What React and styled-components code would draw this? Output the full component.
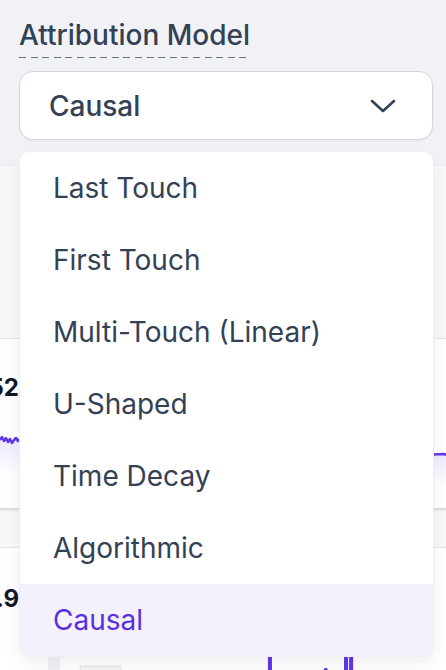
import React from "react";
import styled, { createGlobalStyle } from "styled-components";

const GlobalStyle = createGlobalStyle`
  html, body {
    margin: 0;
    padding: 0;
    background: #f1f2f6;
    font-family: Inter, "Noto Sans", sans-serif;
    overflow: hidden;
  }
`;

const Page = styled.div`
  position: relative;
  width: 446px;
  height: 670px;
  overflow: hidden;
`;

const Header = styled.div`
  height: 165px;
  box-sizing: border-box;
  padding: 18px 13px 0 19px;
  display: flex;
  flex-direction: column;
  align-items: flex-start;
  gap: 13px;
`;

const Label = styled.span`
  font-size: 28px;
  font-weight: 500;
  line-height: 35px;
  color: #334155;
  padding-bottom: 5px;
  background: repeating-linear-gradient(to right, #6b7280 0 7px, transparent 7px 11.6px) left bottom / 100% 1.5px no-repeat;
`;

const SelectButton = styled.div`
  align-self: stretch;
  height: 69px;
  box-sizing: border-box;
  border: 1.5px solid #d3d6dd;
  border-radius: 14px;
  background: #fff;
  box-shadow: 0 1px 2px rgba(16, 24, 40, 0.05);
  display: flex;
  align-items: center;
  justify-content: space-between;
  padding: 0 36px 0 29px;
  font-size: 28px;
  font-weight: 500;
  color: #334155;
`;

const Board = styled.div`
  display: grid;
  grid-template-columns: 48px 1fr;
  gap: 12px;
  margin-right: -40px;
`;

const Card = styled.div`
  display: flex;
  flex-direction: column;
  background: #fff;
  overflow: hidden;
`;

const CardHead = styled.div`
  height: ${p => p.$h}px;
  box-sizing: border-box;
  background: #f7f8fa;
  border-top: 1px solid ${p => (p.$shade ? "#d8dadf" : "#eceef2")};
  border-bottom: 1px solid #e3e5ea;
  box-shadow: ${p => (p.$shade ? "inset 0 3px 3px -2px rgba(0,0,0,0.12)" : "none")};
`;

const CardBody = styled.div`
  height: ${p => p.$h}px;
  position: relative;
  display: flex;
  flex-direction: column;
`;

const Figure = styled.div`
  display: flex;
  justify-content: flex-end;
  overflow: hidden;
  padding: ${p => p.$top}px 29px 0 0;
  font-size: 24px;
  font-weight: 700;
  color: #111827;
  white-space: nowrap;
`;

const Spark = styled.svg`
  display: block;
  margin-top: ${p => p.$top}px;
  width: 100%;
  height: 50px;
`;

const BarChart = styled.svg`
  display: block;
  margin-top: auto;
  width: 100%;
  height: 30px;
`;

const Menu = styled.div`
  position: absolute;
  top: 152px;
  left: 19px;
  width: 415px;
  box-sizing: border-box;
  background: #fff;
  border: 1.5px solid #eeeef5;
  border-top: none;
  border-radius: 10px;
  overflow: hidden;
  box-shadow: 0 8px 20px rgba(15, 23, 42, 0.06);
  z-index: 5;
`;

const Option = styled.div`
  height: 72px;
  display: flex;
  align-items: center;
  padding-left: 33px;
  font-size: 28px;
  font-weight: 400;
  color: ${p => (p.$active ? "#5b2ee0" : "#334155")};
  background: ${p => (p.$active ? "#f3f1fc" : "#fff")};
`;

const options = [
  "Last Touch",
  "First Touch",
  "Multi-Touch (Linear)",
  "U-Shaped",
  "Time Decay",
  "Algorithmic",
  "Causal",
];

function Chevron() {
  return (
    <svg width="26" height="14" viewBox="0 0 26 14" fill="none">
      <path d="M2 2 L13 12 L24 2" stroke="#334155" strokeWidth="2.6" strokeLinecap="round" strokeLinejoin="round" />
    </svg>
  );
}

function Sparkline({ d, id }) {
  return (
    <>
      <defs>
        <linearGradient id={id} x1="0" y1="0" x2="0" y2="1">
          <stop offset="0" stopColor="#6d3df5" stopOpacity="0.12" />
          <stop offset="1" stopColor="#6d3df5" stopOpacity="0" />
        </linearGradient>
      </defs>
      <path d={`${d} L400 50 L0 50 Z`} fill={`url(#${id})`} />
      <path d={d} stroke="#6236f0" strokeWidth="2.5" fill="none" strokeLinejoin="round" />
    </>
  );
}

const leftLine = "M0 14 L2 11 L4 15 L6 12 L8 16 L10 13 L12 17 L14 14 L16 12 L18 15 L20 13 L24 11 L28 14 L32 12 L36 15 L40 13 L48 14";
const rightLine = "M0 20 L40 18 L80 22 L120 16 L160 20 L200 18 L240 22 L280 17 L320 21 L360 19 L372 22 L376 26 L380 27 L384 25 L386 22 L400 22";

const bars = [
  [70, 4], [118, 3], [150, 6], [170, 8], [190, 3], [205, 28], [230, 6], [260, 10], [280, 30], [285, 26], [300, 8], [330, 4], [360, 6], [380, 3],
];

export default function App() {
  return (
    <Page>
      <GlobalStyle />
      <Header>
        <Label>Attribution Model</Label>
        <SelectButton>
          Causal
          <Chevron />
        </SelectButton>
      </Header>

      <Board>
        <Card>
          <CardHead $h={174} />
          <CardBody $h={169}>
            <Figure $top={34}>$2,452</Figure>
            <Spark $top={24} viewBox="0 0 48 50" preserveAspectRatio="none">
              <Sparkline d={leftLine} id="gl" />
            </Spark>
          </CardBody>
          <CardHead $h={40} $shade />
          <CardBody $h={130}>
            <Figure $top={36}>16.9</Figure>
          </CardBody>
        </Card>
        <Card>
          <CardHead $h={174} />
          <CardBody $h={169}>
            <Spark $top={96} viewBox="0 0 400 50" preserveAspectRatio="none">
              <Sparkline d={rightLine} id="gr" />
            </Spark>
          </CardBody>
          <CardHead $h={40} $shade />
          <CardBody $h={130}>
            <BarChart viewBox="0 0 420 30" preserveAspectRatio="none">
              <rect x="20" y="18" width="40" height="12" fill="#f4f5f7" stroke="#e2e4e8" />
              {bars.map(([x, h], i) => (
                <rect key={i} x={x} y={30 - h} width="4" height={h} rx="1.5" fill="#6236f0" />
              ))}
            </BarChart>
          </CardBody>
        </Card>
      </Board>

      <Menu>
        {options.map(o => (
          <Option key={o} $active={o === "Causal"}>{o}</Option>
        ))}
      </Menu>
    </Page>
  );
}
